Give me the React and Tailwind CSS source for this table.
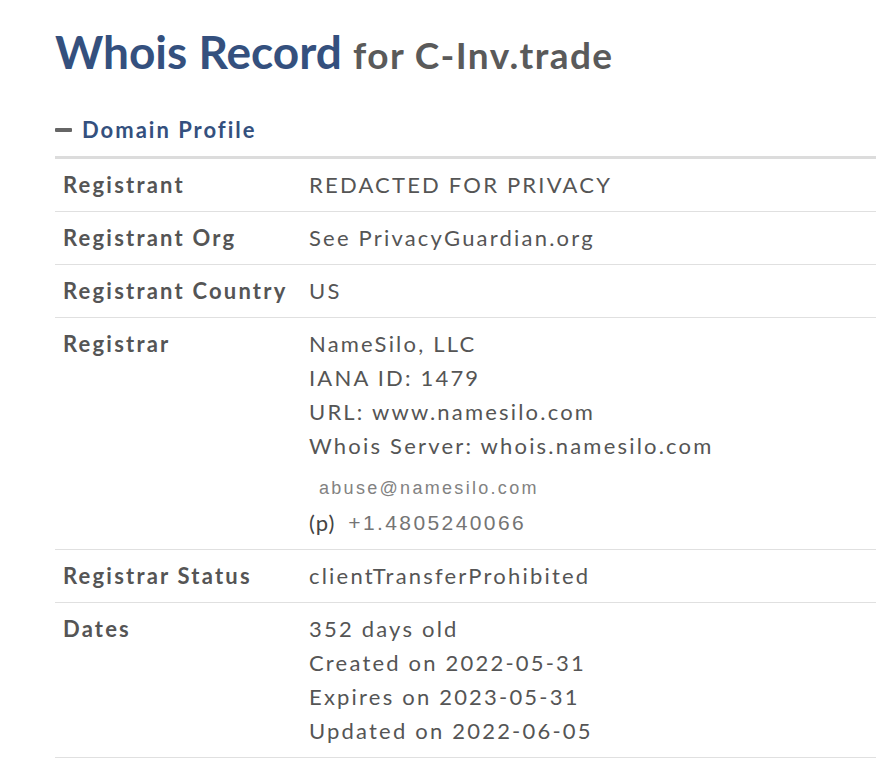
import React from "react";

const rows = [
  { label: "Registrant", lines: ["REDACTED FOR PRIVACY"] },
  { label: "Registrant Org", lines: ["See PrivacyGuardian.org"] },
  { label: "Registrant Country", lines: ["US"] },
  { label: "Registrar", lines: ["NameSilo, LLC", "IANA ID: 1479", "URL: www.namesilo.com", "Whois Server: whois.namesilo.com"], contact: true },
  { label: "Registrar Status", lines: ["clientTransferProhibited"] },
  { label: "Dates", lines: ["352 days old", "Created on 2022-05-31", "Expires on 2023-05-31", "Updated on 2022-06-05"] },
];

export default function App() {
  return (
    <div className="min-h-screen bg-white font-['Lato',sans-serif] pl-[55px] pt-[24px]">
      <h1 className="text-[46px] leading-[56px] font-bold text-[#34507e]">
        Whois Record <span className="text-[37px] tracking-[1.4px] text-[#5a5a5a]">for C-Inv.trade</span>
      </h1>

      <div className="mt-[32px] flex items-center gap-[10px] text-[#34507e] leading-[30px]">
        <span className="block w-[17px] h-[4px] rounded-[1px] bg-[#666]"></span>
        <span className="text-[22px] font-bold tracking-[2px]">Domain Profile</span>
      </div>

      <div className="mt-[11px] border-t-[3px] border-[#dcdcdc]">
        {rows.map((r) => (
          <div key={r.label} className="flex border-b border-[#e0e0e0] pt-[9px] pb-[9px] text-[22px] leading-[34px] text-[#555] tracking-[2.2px]">
            <div className="w-[254px] pl-[8px] font-bold shrink-0">{r.label}</div>
            <div>
              {r.lines.map((l) => (
                <div key={l}>{l}</div>
              ))}
              {r.contact && (
                <>
                  <div className="mt-[8px] pl-[10px] h-[34px] font-['Liberation_Sans',sans-serif] text-[18px] tracking-[2.3px] text-[#828282]">
                    abuse@namesilo.com
                  </div>
                  <div className="flex items-center h-[35px]">
                    <span className="text-[#444] tracking-[1px]">(p)</span>
                    <span className="ml-[13px] font-['Liberation_Sans',sans-serif] text-[21px] tracking-[2.4px] text-[#747474]">+1.4805240066</span>
                  </div>
                </>
              )}
            </div>
          </div>
        ))}
      </div>
    </div>
  );
}
